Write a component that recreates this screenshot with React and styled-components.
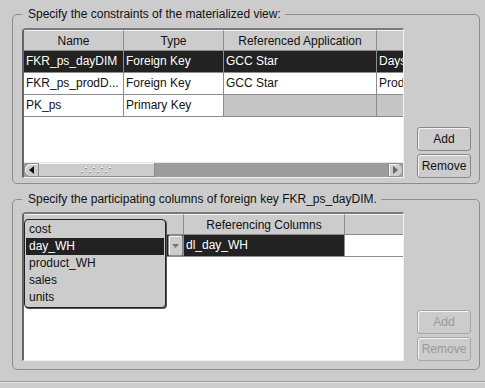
import React from 'react';
import styled, { createGlobalStyle } from 'styled-components';

const Global = createGlobalStyle`
  html, body { margin: 0; padding: 0; background: #cccccc; }
  body { font-family: "Liberation Sans", Arial, sans-serif; font-size: 12px; color: #111; }
  * { box-sizing: border-box; }
`;

const Page = styled.div`
  width: 485px;
  height: 388px;
  padding: 7px 5px 0 12px;
  display: flex;
  flex-direction: column;
  overflow: hidden;
`;

const Group = styled.fieldset`
  margin: 0 0 ${({ gap }) => gap || 0}px 0;
  padding: ${({ pad }) => pad};
  border: 1px solid #8e8e8e;
  border-radius: 5px;
  min-width: 0;
`;

const Legend = styled.legend`
  padding: 0 4px 0 6px;
  line-height: 14px;
  font-size: 12px;
  color: #111;
`;

const Body = styled.div`
  display: flex;
  gap: 13px;
`;

const TableWrap = styled.div`
  position: relative;
  width: 382px;
  height: ${({ h }) => h}px;
`;

const Frame = styled.div`
  width: 100%;
  height: 100%;
  display: flex;
  flex-direction: column;
  background: #fff;
  border-top: 2px solid #7a7a7a;
  border-left: 2px solid #666;
  border-right: 1px solid #f2f2f2;
  border-bottom: 1px solid #f2f2f2;
  border-top-left-radius: 4px;
  overflow: hidden;
`;

const Rows = styled.div`
  flex: 1;
  overflow: hidden;
`;

const Grid = styled.div`
  display: grid;
  grid-template-columns: ${({ cols }) => cols};
  width: max-content;
`;

const HeadCell = styled.div`
  height: 21px;
  line-height: 20px;
  text-align: center;
  white-space: nowrap;
  overflow: hidden;
  background: #cccccc;
  border-top: 1px solid #f4f4f4;
  border-right: 1px solid #8c8c8c;
  border-bottom: 1px solid #8c8c8c;
`;

const Cell = styled.div`
  height: 22px;
  line-height: 21px;
  padding-left: 2px;
  white-space: nowrap;
  overflow: hidden;
  text-overflow: clip;
  color: ${({ sel }) => (sel ? '#fff' : '#111')};
  background: ${({ sel, blank }) => (sel ? '#222' : blank ? '#c6c6c6' : '#fff')};
  border-right: 1px solid #8c8c8c;
  border-bottom: 1px solid #8c8c8c;
`;

const ComboCell = styled(Cell)`
  display: flex;
  justify-content: flex-end;
  padding-left: 0;
  background: #222;
`;

const ComboArrow = styled.div`
  width: 15px;
  height: 21px;
  display: flex;
  align-items: center;
  justify-content: center;
  background: #cccccc;
  border: 1px solid #8c8c8c;
  border-radius: 2px;
  box-shadow: inset 1px 1px 0 #f4f4f4;
`;

const Scroll = styled.div`
  display: flex;
  height: 15px;
  flex-shrink: 0;
  background: #9c9c9c;
  border-top: 1px solid #e8e8e8;
`;

const ArrowBtn = styled.div`
  width: 15px;
  height: 100%;
  display: flex;
  align-items: center;
  justify-content: center;
  background: #cccccc;
  border: 1px solid #8c8c8c;
  border-radius: ${({ side }) => (side === 'left' ? '6px 0 0 6px' : '0 6px 6px 0')};
  box-shadow: inset 1px 1px 0 #f4f4f4;
`;

const Thumb = styled.div`
  width: ${({ w }) => w}px;
  height: 100%;
  display: flex;
  align-items: center;
  justify-content: center;
  background: #cccccc;
  border-right: 1px solid #8c8c8c;
  border-bottom: 1px solid #8c8c8c;
  box-shadow: inset 0 1px 0 #f4f4f4;
`;

const Track = styled.div`
  flex: 1;
`;

const Buttons = styled.div`
  display: flex;
  flex-direction: column;
  justify-content: flex-end;
  gap: 3px;
`;

const Button = styled.button`
  width: 54px;
  height: 24px;
  padding: 0;
  font-family: "Liberation Sans", Arial, sans-serif;
  font-size: 12px;
  color: ${({ disabled }) => (disabled ? '#9a9a9a' : '#111')};
  background: #cccccc;
  border: 1px solid ${({ disabled }) => (disabled ? '#a6a6a6' : '#888')};
  border-radius: 3px;
  box-shadow: inset 1px 1px 0 #f4f4f4;
`;

const Popup = styled.div`
  position: absolute;
  left: 2px;
  top: 7px;
  width: 142px;
  height: 89px;
  padding: 1px;
  background: #cccccc;
  border: 1px solid #222;
  border-radius: 4px;
  box-shadow: 1px 1px 0 #555;
  z-index: 2;
`;

const Item = styled.div`
  height: 17px;
  line-height: 17px;
  padding-left: 3px;
  color: ${({ sel }) => (sel ? '#fff' : '#111')};
  background: ${({ sel }) => (sel ? '#222' : 'transparent')};
`;

const Rule = styled.div`
  margin-top: 11px;
  margin-left: -12px;
  margin-right: -5px;
  height: 2px;
  border-top: 1px solid #999;
  border-bottom: 1px solid #e6e6e6;
`;

const TriLeft = () => (
  <svg width="5" height="8" viewBox="0 0 5 8"><polygon points="5,0 5,8 0,4" fill="#111" /></svg>
);
const TriRight = () => (
  <svg width="5" height="8" viewBox="0 0 5 8"><polygon points="0,0 0,8 5,4" fill="#666" /></svg>
);
const TriDown = () => (
  <svg width="7" height="4" viewBox="0 0 7 4"><polygon points="0,0 7,0 3.5,4" fill="#777" /></svg>
);

const Grip = () => (
  <svg width="36" height="8" viewBox="0 0 36 8">
    {[0, 1, 2, 3].map((i) => (
      <g key={i}>
        <rect x={6 + i * 8} y={1} width="2" height="1" fill="#fff" />
        <rect x={6 + i * 8} y={2} width="2" height="1" fill="#888" />
        <rect x={2 + i * 8} y={5} width="2" height="1" fill="#fff" />
        <rect x={2 + i * 8} y={6} width="2" height="1" fill="#888" />
      </g>
    ))}
  </svg>
);

const constraints = [
  { name: 'FKR_ps_dayDIM', type: 'Foreign Key', app: 'GCC Star', obj: 'Days_DIM', sel: true },
  { name: 'FKR_ps_prodD...', type: 'Foreign Key', app: 'GCC Star', obj: 'Products_DIM' },
  { name: 'PK_ps', type: 'Primary Key', app: '', obj: '', blank: true },
];

const topCols = '100px 100px 153px 180px';
const bottomCols = '160px 161px 60px';

const App = () => (
  <>
    <Global />
    <Page>
      <Group pad="7px 7px 5px 9px" gap={8}>
        <Legend>Specify the constraints of the materialized view:</Legend>
        <Body>
          <TableWrap h={150}>
            <Frame>
              <Rows>
                <Grid cols={topCols}>
                  <HeadCell>Name</HeadCell>
                  <HeadCell>Type</HeadCell>
                  <HeadCell>Referenced Application</HeadCell>
                  <HeadCell>Referenced Dimension</HeadCell>
                  {constraints.map((c) => (
                    <React.Fragment key={c.name}>
                      <Cell sel={c.sel}>{c.name}</Cell>
                      <Cell sel={c.sel}>{c.type}</Cell>
                      <Cell sel={c.sel} blank={c.blank}>{c.app}</Cell>
                      <Cell sel={c.sel} blank={c.blank}>{c.obj}</Cell>
                    </React.Fragment>
                  ))}
                </Grid>
              </Rows>
              <Scroll>
                <ArrowBtn side="left"><TriLeft /></ArrowBtn>
                <Thumb w={116}><Grip /></Thumb>
                <Track />
                <ArrowBtn side="right"><TriRight /></ArrowBtn>
              </Scroll>
            </Frame>
          </TableWrap>
          <Buttons>
            <Button>Add</Button>
            <Button>Remove</Button>
          </Buttons>
        </Body>
      </Group>

      <Group pad="6px 7px 8px 9px">
        <Legend>Specify the participating columns of foreign key FKR_ps_dayDIM.</Legend>
        <Body>
          <TableWrap h={149}>
            <Frame>
              <Rows>
                <Grid cols={bottomCols}>
                  <HeadCell />
                  <HeadCell>Referencing Columns</HeadCell>
                  <HeadCell />
                  <ComboCell>
                    <ComboArrow><TriDown /></ComboArrow>
                  </ComboCell>
                  <Cell sel>dl_day_WH</Cell>
                  <Cell />
                </Grid>
              </Rows>
            </Frame>
            <Popup>
              <Item>cost</Item>
              <Item sel>day_WH</Item>
              <Item>product_WH</Item>
              <Item>sales</Item>
              <Item>units</Item>
            </Popup>
          </TableWrap>
          <Buttons>
            <Button disabled>Add</Button>
            <Button disabled>Remove</Button>
          </Buttons>
        </Body>
      </Group>
      <Rule />
    </Page>
  </>
);

export default App;
